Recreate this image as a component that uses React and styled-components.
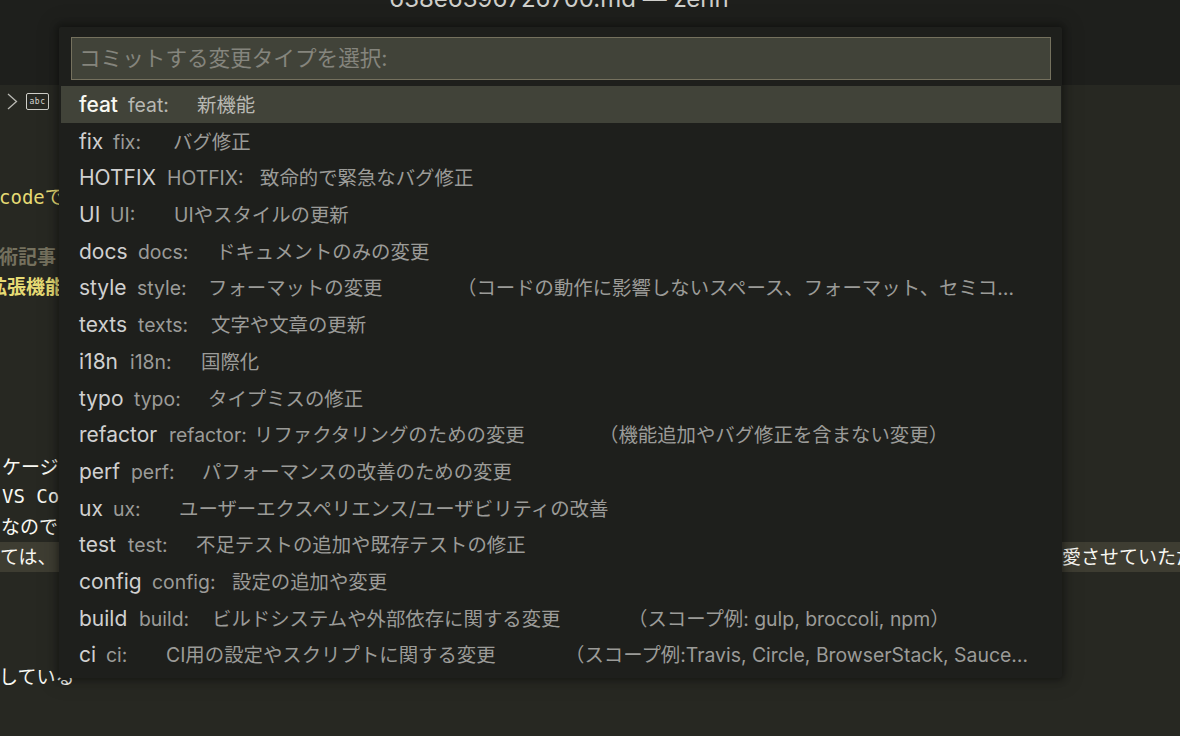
import React from "react";
import styled, { createGlobalStyle } from "styled-components";

const commits = [
  { name: "feat", labelW: 49, keyW: 69, desc: "新機能" },
  { name: "fix", labelW: 34, keyW: 60, desc: "バグ修正" },
  { name: "HOTFIX", labelW: 88, keyW: 93, desc: "致命的で緊急なバグ修正" },
  { name: "UI", labelW: 31, keyW: 64, desc: "UIやスタイルの更新" },
  { name: "docs", labelW: 59, keyW: 78, desc: "ドキュメントのみの変更" },
  {
    name: "style",
    labelW: 58,
    keyW: 71,
    descW: 249,
    desc: "フォーマットの変更",
    note: "（コードの動作に影響しないスペース、フォーマット、セミコロンの追加など）",
  },
  { name: "texts", labelW: 59, keyW: 73, desc: "文字や文章の更新" },
  { name: "i18n", labelW: 51, keyW: 71, desc: "国際化" },
  { name: "typo", labelW: 55, keyW: 74, desc: "タイプミスの修正" },
  {
    name: "refactor",
    labelW: 90,
    keyW: 85,
    descW: 345,
    desc: "リファクタリングのための変更",
    note: "（機能追加やバグ修正を含まない変更）",
  },
  { name: "perf", labelW: 52, keyW: 71, desc: "パフォーマンスの改善のための変更" },
  { name: "ux", labelW: 34, keyW: 66, desc: "ユーザーエクスペリエンス/ユーザビリティの改善" },
  { name: "test", labelW: 49, keyW: 68, desc: "不足テストの追加や既存テストの修正" },
  { name: "config", labelW: 73, keyW: 80, desc: "設定の追加や変更" },
  {
    name: "build",
    labelW: 60,
    keyW: 73,
    descW: 416,
    desc: "ビルドシステムや外部依存に関する変更",
    note: "（スコープ例: gulp, broccoli, npm）",
  },
  {
    name: "ci",
    labelW: 27,
    keyW: 60,
    descW: 399,
    desc: "CI用の設定やスクリプトに関する変更",
    note: "（スコープ例:Travis, Circle, BrowserStack, SauceLabs, Kokoro）",
  },
];

const editorLines = [
  { text: "codeで", tone: "yellow", shift: -1 },
  {},
  { text: "技術記事", tone: "grey", bold: true, shift: -20 },
  { text: "拡張機能", tone: "yellow", bold: true, shift: -12 },
  {},
  {},
  {},
  {},
  {},
  { text: "パッケージ", shift: -36 },
  { text: "VS Code", shift: 2 },
  { text: "なので", shift: 1 },
  { text: "ては、", right: "愛させていただいています", active: true },
  {},
  {},
  {},
  { text: "している", shift: -1 },
];

const GlobalStyle = createGlobalStyle`
  html, body {
    margin: 0;
    height: 100%;
    background: #272822;
    overflow: hidden;
  }
  #root {
    height: 100%;
  }
`;

const sans = `Inter, "Noto Sans CJK JP", sans-serif`;
const mono = `"DejaVu Sans Mono", "Noto Sans CJK JP", monospace`;

const Page = styled.div`
  position: relative;
  height: 736px;
  display: flex;
  flex-direction: column;
  overflow: hidden;
`;

const TitleBar = styled.header`
  height: 85px;
  flex: none;
  box-sizing: border-box;
  padding-right: 62px;
  background: #1e1f1c;
  display: flex;
  justify-content: center;
  overflow: hidden;
`;

const Title = styled.div`
  font-family: ${sans};
  font-size: 24px;
  line-height: 24px;
  margin-top: -13px;
  color: #cfcfcb;
  white-space: nowrap;
`;

const Editor = styled.main`
  flex: 1;
  background: #272822;
  display: flex;
  flex-direction: column;
`;

const Breadcrumb = styled.div`
  height: 97px;
  flex: none;
  box-sizing: border-box;
  padding: 8px 0 0 7px;
  display: flex;
  align-items: flex-start;
  gap: 8px;
  color: #d6d6d0;
`;

const AbcIcon = styled.span`
  width: 23px;
  height: 17px;
  box-sizing: border-box;
  border: 1.5px solid #cfcfc9;
  border-radius: 2px;
  display: flex;
  align-items: center;
  justify-content: center;
  font-family: ${mono};
  font-size: 8px;
  letter-spacing: 0.6px;
  color: #d6d6d0;
`;

const Crumb = styled.span`
  font-family: ${mono};
  font-size: 14px;
  line-height: 20px;
  color: #a9a9a2;
`;

const Line = styled.div`
  height: 30px;
  box-sizing: border-box;
  padding-bottom: 3px;
  display: flex;
  justify-content: space-between;
  align-items: center;
  white-space: nowrap;
  font-family: ${mono};
  font-size: 19px;
  background: ${(p) => (p.$active ? "#3e3d32" : "transparent")};
  color: ${(p) =>
    p.$tone === "yellow" ? "#e6db74" : p.$tone === "grey" ? "#75715e" : "#f8f8f2"};
  font-weight: ${(p) => (p.$bold ? 700 : 400)};
`;

const RightText = styled.span`
  width: 118px;
  overflow: hidden;
  flex: none;
`;

const Palette = styled.section`
  position: absolute;
  left: 59px;
  top: 27px;
  width: 1003px;
  height: 651px;
  box-sizing: border-box;
  padding-top: 10px;
  background: #1e1f1c;
  border-radius: 2px;
  box-shadow: 0 0 7px 2px rgba(0, 0, 0, 0.36), 0 0 20px 6px rgba(0, 0, 0, 0.1);
  display: flex;
  flex-direction: column;
`;

const SearchBox = styled.div`
  height: 43px;
  flex: none;
  box-sizing: border-box;
  margin: 0 11px 6px 12px;
  padding: 0 0 5px 7px;
  background: #414339;
  border: 1px solid #75715e;
  display: flex;
  align-items: center;
  font-family: ${sans};
  font-size: 21.6px;
  color: #85857d;
`;

const List = styled.ul`
  list-style: none;
  margin: 0 1px 0 2px;
  padding: 0;
`;

const Row = styled.li`
  height: 36.7px;
  line-height: 38px;
  box-sizing: border-box;
  padding: 0 30px 0 18px;
  display: flex;
  align-items: baseline;
  white-space: pre;
  font-family: ${sans};
  background: ${(p) => (p.$active ? "#414339" : "transparent")};
`;

const Label = styled.span`
  flex: none;
  font-size: 21px;
  min-width: ${(p) => p.$width}px;
  font-weight: ${(p) => (p.$active ? 500 : 400)};
  color: ${(p) => (p.$active ? "#f8f8f2" : "#d0d0d0")};
`;

const Key = styled.span`
  flex: none;
  font-size: 19.4px;
  min-width: ${(p) => p.$width || 0}px;
  color: ${(p) => (p.$active ? "#b8b8b2" : "#9b9b98")};
`;

const Note = styled.span`
  flex: 1;
  min-width: 0;
  font-size: 19.4px;
  color: #9b9b98;
  overflow: hidden;
  text-overflow: ellipsis;
`;

export default function App() {
  return (
    <Page>
      <GlobalStyle />
      <TitleBar>
        <Title>638e6396726700.md — zenn</Title>
      </TitleBar>
      <Editor>
        <Breadcrumb>
          <svg width="11" height="17" viewBox="0 0 11 17" fill="none">
            <path d="M1 1l8.5 7.5L1 16" stroke="#b9b9b3" strokeWidth="1.3" />
          </svg>
          <AbcIcon>abc</AbcIcon>
          <Crumb>;</Crumb>
        </Breadcrumb>
        {editorLines.map((line, i) => (
          <Line key={i} $tone={line.tone} $bold={line.bold} $active={line.active}>
            <span style={line.shift ? { marginLeft: line.shift } : undefined}>
              {line.text}
            </span>
            {line.right && <RightText>{line.right}</RightText>}
          </Line>
        ))}
      </Editor>
      <Palette>
        <SearchBox>コミットする変更タイプを選択:</SearchBox>
        <List>
          {commits.map((c, i) => (
            <Row key={c.name} $active={i === 0}>
              <Label $width={c.labelW} $active={i === 0}>
                {c.name}
              </Label>
              <Key $width={c.keyW} $active={i === 0}>
                {c.name}:
              </Key>
              <Key $width={c.descW} $active={i === 0}>
                {c.desc}
              </Key>
              {c.note && <Note>{c.note}</Note>}
            </Row>
          ))}
        </List>
      </Palette>
    </Page>
  );
}
